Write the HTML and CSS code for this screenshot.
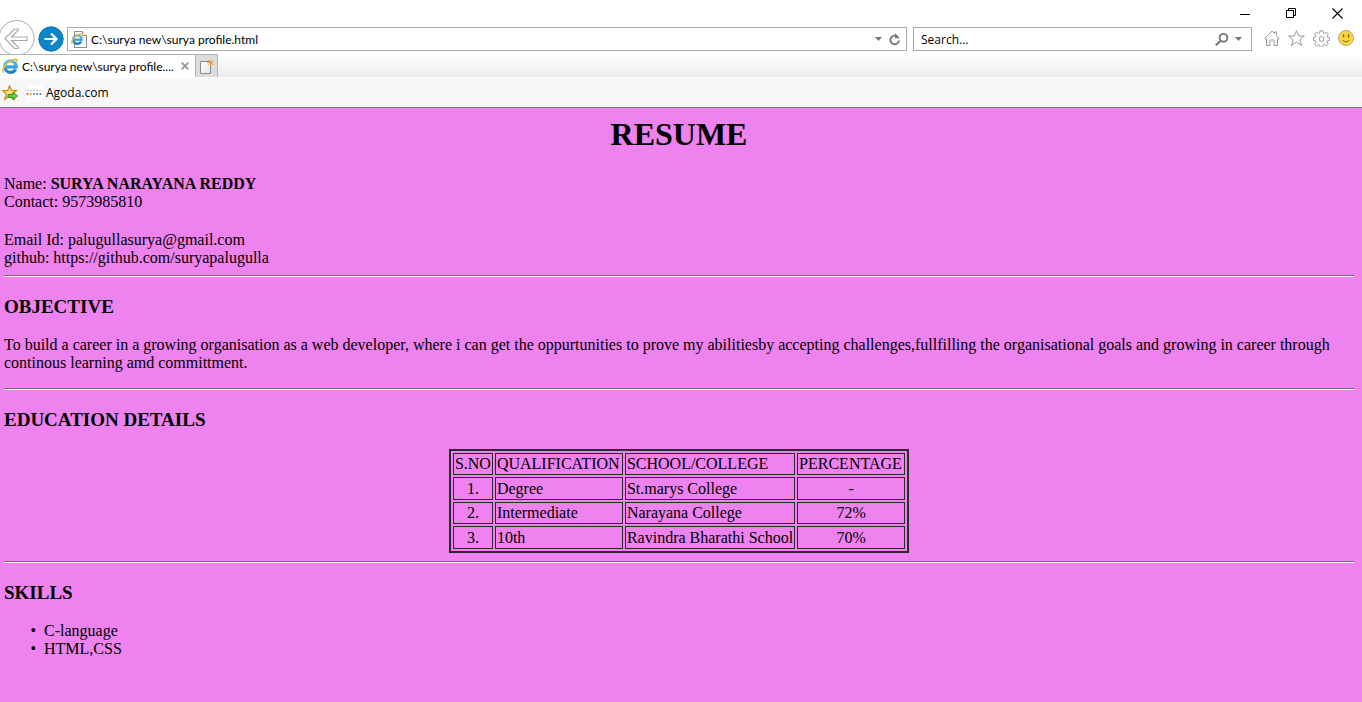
FILE: index.html
```html
<!DOCTYPE html>
<html lang="en">
<head>
<meta charset="utf-8">
<title>Resume</title>
<link rel="stylesheet" href="styles.css">
</head>
<body>
<svg width="0" height="0" class="defs" aria-hidden="true">
  <defs>
    <linearGradient id="blue" x1="0" y1="0" x2="0" y2="1"><stop offset="0" stop-color="#5cc0f0"/><stop offset="1" stop-color="#1b7fcb"/></linearGradient>
    <linearGradient id="paper" x1="0" y1="0" x2="1" y2="1"><stop offset="0" stop-color="#fff"/><stop offset="1" stop-color="#e4e4e4"/></linearGradient>
    <symbol id="ie" viewBox="0 0 16 16">
      <path d="M13.600 11.200A5.700 5.700 0 1 1 14.200 8.800H4.500" fill="none" stroke="url(#blue)" stroke-width="3.200"/>
      <path d="M1.700 14.600C-.8 12.500 2.800 6 8.600 2.900 12.600.7 15.700.6 15 4.100" fill="none" stroke="#f3bd22" stroke-width="1.600"/>
    </symbol>
  </defs>
</svg>
<header class="browser">
  <div class="titlebar">
    <button class="win" aria-label="Minimize"><svg width="11" height="11"><path d="M0 6.500h10" stroke="#000"/></svg></button>
    <button class="win" aria-label="Restore"><svg width="11" height="11" fill="none" stroke="#000"><path d="M.5 2.500h7v7h-7zM2.500 2.500v-2h7v7h-2"/></svg></button>
    <button class="win" aria-label="Close"><svg width="11" height="11"><path d="M.5.5l10 10M10.500.5l-10 10" stroke="#000" stroke-width="1.100"/></svg></button>
  </div>
  <div class="navbar">
    <button class="back" aria-label="Back"><svg width="35" height="34" fill="none" stroke="#aaa"><circle cx="16.500" cy="18" r="17.500"/><path d="M5 18.500l9.500-9.500h3.500l.5 1-7 7h15.500v3.500H11.500l7 7-.5 1h-3.500z" stroke-width="1.200"/></svg></button>
    <button class="forward" aria-label="Forward"><svg width="26" height="26"><circle cx="13" cy="13" r="12.200" fill="#0c86c6" stroke="#0876b2"/><path d="M6.500 13h12M13 7.500l5.500 5.500-5.500 5.500" fill="none" stroke="#fff" stroke-width="2.200"/></svg></button>
    <div class="field address">
      <svg width="16" height="17"><path d="M3.500.5h8l4 4v12h-12z" fill="#fafafa" stroke="#8f8f8f"/><path d="M11.500.5v4h4" fill="#fff" stroke="#8f8f8f"/><use href="#ie" x="0" y="2" width="12" height="12"/></svg>
      <input type="text" aria-label="Address" value="C:\surya new\surya profile.html">
      <button aria-label="Show addresses"><svg width="7" height="4"><path d="M0 0h7L3.500 4z" fill="#777"/></svg></button>
      <button class="refresh" aria-label="Refresh"><svg width="12" height="13"><path d="M8 3.300A4.300 4.300 0 1 0 10 7.500" fill="none" stroke="#777" stroke-width="1.900"/><path d="M6 0v5.200h4.800z" fill="#777"/></svg></button>
    </div>
    <div class="field search">
      <input type="text" aria-label="Search" value="Search...">
      <button aria-label="Search"><svg width="14" height="13" fill="none" stroke="#777"><circle cx="8.500" cy="4.800" r="3.900" stroke-width="1.900"/><path d="M5.700 7.700L.8 12.200" stroke-width="2.200"/></svg></button>
      <button class="choose" aria-label="Search options"><svg width="7" height="4"><path d="M0 0h7L3.500 4z" fill="#777"/></svg></button>
    </div>
    <div class="tools">
      <button aria-label="Home"><svg width="16" height="16" fill="none" stroke="#999"><path d="M.7 8.500L8 1l2.500 2.500V2h2v3.500l2.800 3-1 1-.8-.8v6.800h-3.500V10h-4v5.500H2.500V8.700l-.8.8z"/></svg></button>
      <button aria-label="Favorites"><svg width="17" height="16" fill="none" stroke="#999"><path d="M8.500.7l2.200 5.300h5.600l-4.500 3.700 1.800 5.800-5.100-3.500-5.100 3.500 1.800-5.800L.7 6h5.600z"/></svg></button>
      <button aria-label="Tools"><svg width="17" height="17" fill="none" stroke="#999"><path d="M7 .8h3l.4 2.300 1.100.5 2-1.400 1.900 2-1.300 1.900.4 1.100 2.200.4v2.800l-2.200.4-.5 1.200 1.300 1.900-1.900 2-2-1.300-1.100.4-.3 2.200H7l-.4-2.200-1.100-.4-2 1.300-1.900-2 1.300-1.900-.4-1.200-2.100-.4V7.600l2.100-.4.500-1.100-1.400-1.900 2-2 1.900 1.400 1.100-.5z"/><circle cx="8.500" cy="9" r="2.400"/></svg></button>
      <button aria-label="Feedback"><svg width="16" height="16"><circle cx="8" cy="8" r="7.500" fill="#fcd63f" stroke="#b9a970"/><path d="M5.500 4.200v3.300M10.500 4.200v3.300" stroke="#7c6820" stroke-width="1.500"/><path d="M4.500 10.500q3.500 3 7 0" fill="none" stroke="#7c6820"/></svg></button>
    </div>
  </div>
  <div class="tabs">
    <div class="tab">
      <svg width="16" height="16"><use href="#ie" width="16" height="16"/></svg>
      <span>C:\surya new\surya profile....</span>
      <button aria-label="Close tab"><svg width="8" height="8"><path d="M.7.7l6.600 6.600M7.300.7L.7 7.300" stroke="#999" stroke-width="1.900"/></svg></button>
    </div>
    <button class="newtab" aria-label="New tab"><svg width="14" height="15"><path d="M.5 2.500h10v12H.5z" fill="url(#paper)" stroke="#8b8b8b"/><path d="M10.500 0v7M7 3.500h7M8 1l5 5M13 1L8 6" stroke="#ed9a2d" stroke-width=".8"/></svg></button>
  </div>
  <nav class="favorites">
    <button aria-label="Add to favorites"><svg width="16" height="16"><path d="M7.500.8l1.900 4.700h5.100l-4 3.400 1.500 5.400-4.500-3-4.900 3 1.800-5.300L.7 5.600h5z" fill="#ffe47c" stroke="#c58c17" stroke-width="1.200"/><path d="M6 9.500h5V7l4.500 4-4.500 4v-2.500H6z" fill="#61d33b" stroke="#2e9120"/></svg></button>
    <a href="#"><svg width="16" height="16"><path d="M0 0h16v16H0z" fill="#fff"/><path d="M1 5.500h14" stroke="#bbb" stroke-dasharray="2 1"/><circle cx="1.500" cy="9" r="1.100" fill="#e44"/><circle cx="4.700" cy="9" r="1.100" fill="#f0a030"/><circle cx="8" cy="9" r="1.100" fill="#3ab070"/><circle cx="11.200" cy="9" r="1.100" fill="#a051b8"/><circle cx="14.500" cy="9" r="1.100" fill="#3e87d8"/></svg>Agoda.com</a>
  </nav>
</header>
<main class="page">
  <h1>RESUME</h1>
  <p class="contact">Name: <b>SURYA NARAYANA REDDY</b><br>Contact: 9573985810</p>
  <p class="contact">Email Id: palugullasurya@gmail.com<br>github: https://github.com/suryapalugulla</p>
  <hr>
  <h3>OBJECTIVE</h3>
  <p>To build a career in a growing organisation as a web developer, where i can get the oppurtunities to prove my abilitiesby accepting challenges,fullfilling the organisational goals and growing in career through continous learning amd committment.</p>
  <hr>
  <h3>EDUCATION DETAILS</h3>
  <table>
    <colgroup><col class="number"><col class="qualification"><col class="school"><col class="percentage"></colgroup>
    <tr><td>S.NO</td><td>QUALIFICATION</td><td>SCHOOL/COLLEGE</td><td>PERCENTAGE</td></tr>
    <tr><td class="mid">1.</td><td>Degree</td><td>St.marys College</td><td class="mid">-</td></tr>
    <tr><td class="mid">2.</td><td>Intermediate</td><td>Narayana College</td><td class="mid">72%</td></tr>
    <tr><td class="mid">3.</td><td>10th</td><td>Ravindra Bharathi School</td><td class="mid">70%</td></tr>
  </table>
  <hr>
  <h3>SKILLS</h3>
  <ul>
    <li>C-language</li>
    <li>HTML,CSS</li>
  </ul>
</main>
</body>
</html>
```
FILE: styles.css
```css
* { box-sizing: border-box; }
body {
  margin: 0;
  min-height: 100vh;
  display: flex;
  flex-direction: column;
  background: #fff;
}
.defs { position: absolute; }
.browser, .browser input {
  font: 12px/16px "Open Sans", "Noto Sans", sans-serif;
  color: #000;
}
.browser .address input, .tab { font-family: Lato, "Open Sans", sans-serif; }
.browser button {
  border: 0;
  padding: 0;
  background: none;
  display: flex;
  align-items: center;
  justify-content: center;
  flex: none;
}
.browser svg { flex: none; display: block; }
.titlebar {
  height: 27px;
  display: flex;
  justify-content: flex-end;
  padding-right: 2px;
}
.browser .win { width: 46px; height: 27px; }
.navbar {
  height: 27px;
  display: flex;
  align-items: flex-start;
}
.browser .back { width: 35px; height: 27px; align-items: flex-end; }
.browser .forward { width: 26px; height: 24px; margin: 0 3px; }
.field {
  height: 24px;
  display: flex;
  align-items: center;
  border: 1px solid #ababab;
  background: #fff;
}
.field input {
  flex: 1;
  min-width: 0;
  border: 0;
  padding: 2px 4px 0;
  outline: 0;
  background: none;
}
.address { flex: 830; padding: 0 5px 0 3px; }
.browser .refresh { margin-left: 7px; }
.search { flex: 325; margin-left: 6px; padding: 0 9px 0 3px; }
.browser .choose { margin-left: 6px; }
.tools {
  display: flex;
  align-items: center;
  gap: 8px;
  height: 22px;
  padding: 0 8px 0 12px;
}
.tabs {
  height: 23px;
  display: flex;
  background: linear-gradient(#fff, #ececec);
}
.tab {
  width: 195px;
  display: flex;
  align-items: center;
  gap: 4px;
  padding: 0 6px 0 2px;
  background: #fff;
  border-top: 1px solid #b4b4b4;
}
.tab span { flex: 1; padding-top: 2px; white-space: nowrap; }
.browser .newtab {
  width: 23px;
  border: 1px solid #b4b4b4;
  border-bottom: 0;
  background: #dcdcdc;
}
.favorites {
  height: 31px;
  display: flex;
  align-items: center;
  gap: 8px;
  padding: 0 2px;
  background: #f7f7f7;
  border-top: 1px solid #fff;
  border-bottom: 1px solid #777;
}
.favorites a {
  display: flex;
  align-items: center;
  gap: 4px;
  color: #000;
  text-decoration: none;
}
.page {
  flex: 1;
  padding: 8px 8px 24px 4px;
  background: violet;
  color: #000;
  font: 16px/18px "Liberation Serif", "Times New Roman", serif;
}
h1 {
  margin: 0 0 23px;
  font-size: 32px;
  line-height: 36px;
  text-align: center;
}
h3 { margin: 19px 0; font-size: 19px; line-height: 21px; }
p { margin: 16px 0; }
.contact { margin: 0; }
.contact + .contact { margin-top: 20px; }
hr {
  margin: 8px 0;
  border: 0;
  border-top: 1px solid #6e6e6e;
  border-bottom: 1px solid #f4eef4;
}
table {
  margin: 0 auto;
  border: 2px solid #2a2a2a;
  border-spacing: 2px;
}
.number { width: 40px; }
.qualification { width: 128px; }
.school { width: 170px; }
.percentage { width: 108px; }
td {
  height: 22px;
  padding: 1px;
  border: 1px solid #2a2a2a;
  white-space: nowrap;
}
tr:nth-child(even) td { height: 23px; }
.mid { text-align: center; }
ul {
  margin: 19px 0;
  padding-left: 40px;
  list-style-type: "•\00a0\00a0";
}
```
